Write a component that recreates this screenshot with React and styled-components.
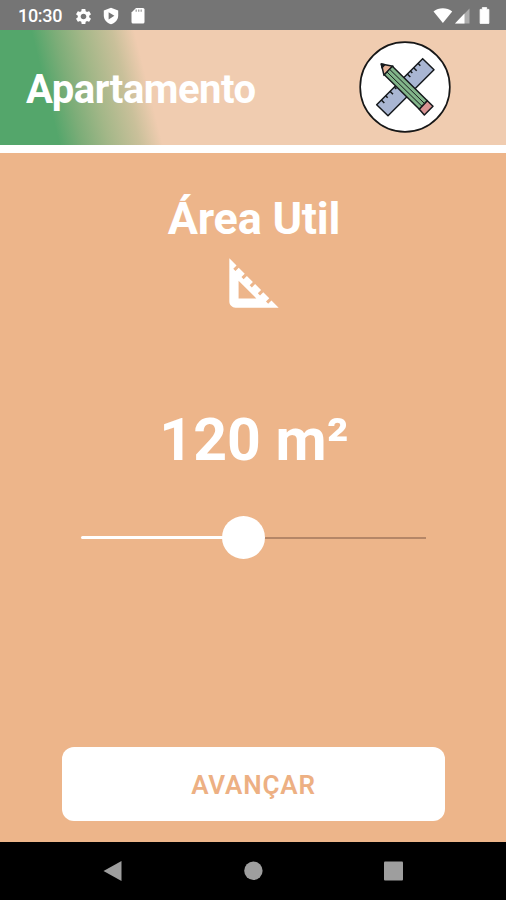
import React, { useState } from "react";
import styled, { createGlobalStyle } from "styled-components";
//Icons
import { MdSettings, MdSquareFoot } from "react-icons/md";

const MAX_AREA = 254;

const App = () => {
  const [area, setArea] = useState(120);
  const percent = (area / MAX_AREA) * 100;

  return (
    <Screen>
      <GlobalStyle />
      <StatusBar>
        <Clock>10:30</Clock>
        <StatusIcons>
          <MdSettings size={19} />
          <ShieldIcon />
          <CardIcon />
        </StatusIcons>
        <SignalIcons />
      </StatusBar>
      <Header>
        <Title>Apartamento</Title>
        <Logo />
      </Header>
      <Content>
        <Subtitle>Área Util</Subtitle>
        <MdSquareFoot size={74} />
        <Value>{area} m²</Value>
        <Slider>
          <Filled style={{ width: `${percent}%` }} />
          <Thumb />
          <Track />
          <Range
            type="range"
            aria-label="Área Util"
            min="0"
            max={MAX_AREA}
            value={area}
            onChange={(e) => setArea(Number(e.target.value))}
          />
        </Slider>
        <Button>AVANÇAR</Button>
      </Content>
      <NavBar>
        <svg width="20" height="22" viewBox="0 0 20 22">
          <path d="M0.5 11 L18.5 1 V21 Z" />
        </svg>
        <svg width="20" height="22" viewBox="0 0 20 22">
          <circle cx="10.4" cy="10.8" r="9.2" />
        </svg>
        <svg width="20" height="22" viewBox="0 0 20 22">
          <rect x="1" y="1.5" width="19" height="19" rx="1" />
        </svg>
      </NavBar>
    </Screen>
  );
};

const ShieldIcon = () => (
  <svg width="18" height="18" viewBox="0 0 18 18">
    <path
      d="M9 .8 L16.2 3.4 V8.4 C16.2 12.7 13.2 16 9 17.2 C4.8 16 1.8 12.7 1.8 8.4 V3.4 Z"
      fill="#fff"
    />
    <path d="M6.6 5.2 L12.4 8.8 L6.6 12.4 Z" fill="#757575" />
  </svg>
);

const CardIcon = () => (
  <svg width="18" height="18" viewBox="0 0 18 18">
    <path d="M7 1 H14 Q15.5 1 15.5 2.5 V15 Q15.5 16.5 14 16.5 H4 Q2.5 16.5 2.5 15 V5.5 Z" fill="#fff" />
    <path d="M7.2 2.6 V4.8 M9.7 2.6 V4.8 M12.2 2.6 V4.8" stroke="#a5a5a5" strokeWidth="1.4" />
  </svg>
);

const SignalIcons = () => (
  <svg width="58" height="20" viewBox="0 0 58 20" fill="#fff">
    <path d="M0.5 5.4 C5.8 1.2 13.8 1.2 19.2 5.4 L9.9 17 Z" />
    <path d="M36.5 2.5 V17.5 H22 Z" opacity="0.4" />
    <path d="M31.5 7.6 V17.5 H22 Z" />
    <path d="M47.1 3.4 h2.2 v-1.8 h4.4 v1.8 h2.2 v14 h-8.8 z" stroke="#fff" strokeWidth="0.8" strokeLinejoin="round" />
  </svg>
);

const Logo = () => (
  <LogoSvg width="92" height="92" viewBox="26 18 276 276">
    <circle cx="164" cy="156" r="134.5" fill="#fff" stroke="#171717" strokeWidth="5" />
    <g stroke="#15191c" strokeWidth="4.5" strokeLinejoin="round">
      <path d="M79 209 L217 71 L251 104 L113 242 Z" fill="#a9b6d3" />
      <path
        d="M93 195 l9 9 M106 182 l6 6 M119 169 l9 9 M132 156 l6 6 M171 117 l9 9 M180 108 l6 6 M190 98 l9 9 M203 85 l7 7"
        fill="none"
      />
      <path d="M93 87 L128 94 L101 121 Z" fill="#e3b096" />
      <path d="M93 87 L103 89 L95 98 Z" fill="#15191c" />
      <path d="M102 119 L126 94 L231 197 L207 223 Z" fill="#82b58a" />
      <path d="M110 111 L215 214 M118 103 L223 206" strokeWidth="3" />
      <path d="M231 197 L248 214 L222 240 L207 223 Z" fill="#d99494" />
    </g>
  </LogoSvg>
);

const GlobalStyle = createGlobalStyle`
  * {
    margin: 0;
    padding: 0;
    box-sizing: border-box;
  }
  body {
    font-family: Roboto, sans-serif;
    color: #fff;
  }
`;

const Screen = styled.div`
  width: 506px;
  height: 900px;
  display: flex;
  flex-direction: column;
  overflow: hidden;
  background: #edb58a;
`;
const StatusBar = styled.div`
  height: 30px;
  display: flex;
  align-items: center;
  padding: 2px 15px 0 18px;
  background: #757575;
`;
const Clock = styled.span`
  width: 56px;
  font-size: 18px;
  font-weight: 500;
  line-height: 20px;
  letter-spacing: -0.3px;
`;
const StatusIcons = styled.div`
  display: flex;
  flex: 1;
  gap: 9px;
`;
const Header = styled.header`
  height: 123px;
  display: flex;
  justify-content: space-between;
  align-items: center;
  padding: 0 55px 0 26px;
  border-bottom: 8px solid #fff;
  background: linear-gradient(76deg, #54a66b 58px, #7cad78 80px, #a3b788 106px, #c9c09a 136px, #f0ccb0 158px) padding-box;
`;
const LogoSvg = styled.svg`
  margin-bottom: 1px;
`;
const Title = styled.h1`
  font-size: 40px;
  line-height: 48px;
  letter-spacing: -0.48px;
  padding-top: 5px;
`;
const Content = styled.main`
  flex: 1;
  display: flex;
  flex-direction: column;
  align-items: center;
  padding: 39px 0 0 1px;
`;
const Subtitle = styled.h2`
  padding-left: 1px;
  font-size: 45px;
  line-height: 54px;
  letter-spacing: -0.25px;
`;
const Value = styled.p`
  margin-top: 85px;
  padding-left: 1px;
  font-size: 59px;
  font-weight: bold;
  line-height: 70px;
`;
const Slider = styled.div`
  position: relative;
  width: 345px;
  height: 43px;
  margin-top: 41px;
  display: flex;
  align-items: center;
`;
const Filled = styled.div`
  height: 3px;
  border-radius: 2px;
  background: #fff;
`;
const Thumb = styled.div`
  flex: none;
  z-index: 1;
  width: 43px;
  height: 43px;
  margin: 0 -21.5px;
  border-radius: 50%;
  background: #fff;
`;
const Track = styled.div`
  flex: 1;
  height: 2px;
  background: #b58667;
`;
const Range = styled.input`
  position: absolute;
  inset: 0;
  z-index: 2;
  width: 100%;
  opacity: 0;
  cursor: pointer;
`;
const Button = styled.button`
  width: 383px;
  height: 74px;
  margin-top: auto;
  margin-bottom: 21px;
  border: none;
  border-radius: 12px;
  background: #fff;
  color: #edb083;
  font: 600 26px/30px Roboto, sans-serif;
  letter-spacing: 0.8px;
  padding-top: 2px;
`;
const NavBar = styled.nav`
  height: 58px;
  display: flex;
  justify-content: space-between;
  align-items: center;
  padding: 0 103px;
  background: #000;
  fill: #9e9e9e;
`;

export default App;
